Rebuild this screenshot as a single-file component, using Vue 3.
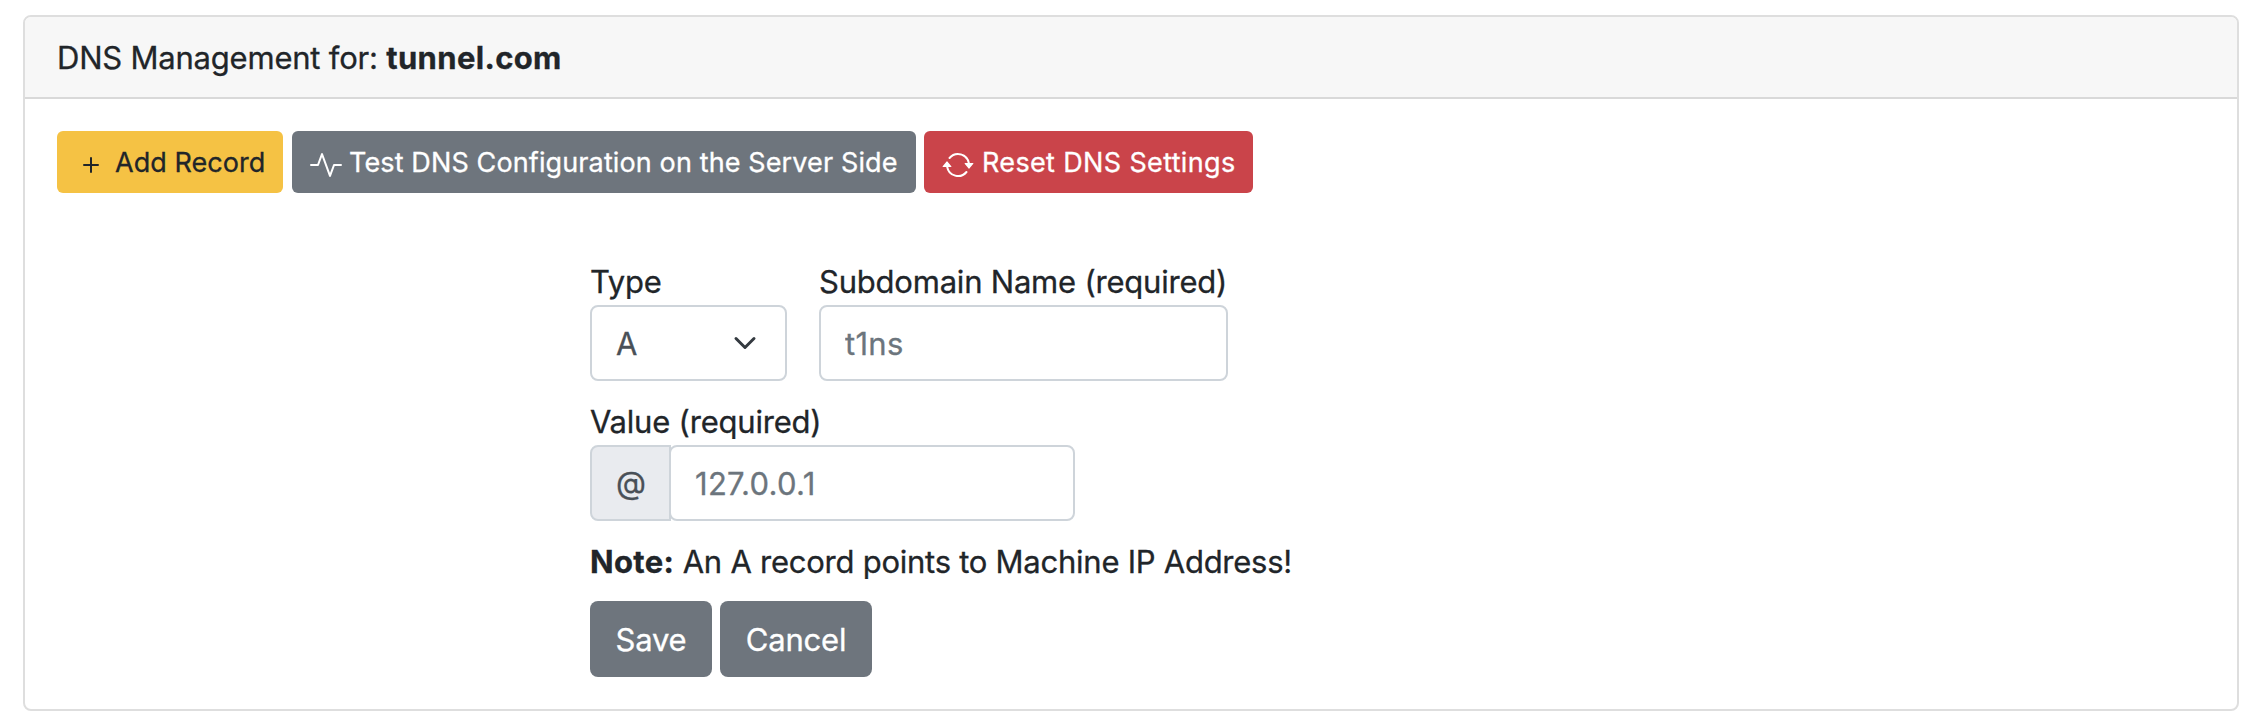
<script setup>
import { ref } from 'vue'

const type = ref('A')
const subdomain = ref('')
const value = ref('')
</script>

<template>
  <main class="page">
    <section class="card">
      <header class="card-header"><span class="heading">DNS Management for:</span> <strong class="domain">tunnel.com</strong></header>
      <div class="card-body">
        <div class="toolbar">
          <button type="button" class="btn-sm add">
            <svg class="icon" viewBox="0 0 16 16" fill="currentColor"><path d="M8 4a.5.5 0 0 1 .5.5v3h3a.5.5 0 0 1 0 1h-3v3a.5.5 0 0 1-1 0v-3h-3a.5.5 0 0 1 0-1h3v-3A.5.5 0 0 1 8 4z" /></svg>
            <span>Add Record</span>
          </button>
          <button type="button" class="btn-sm test">
            <svg class="icon" viewBox="0 0 16 16" fill="currentColor"><path d="M6 2a.5.5 0 0 1 .47.33L10 12.036l1.53-4.208A.5.5 0 0 1 12 7.5h3.5a.5.5 0 0 1 0 1h-3.15l-1.88 5.17a.5.5 0 0 1-.94 0L6 3.964 4.47 8.171A.5.5 0 0 1 4 8.5H.5a.5.5 0 0 1 0-1h3.15l1.88-5.17A.5.5 0 0 1 6 2z" /></svg>
            <span>Test DNS Configuration on the Server Side</span>
          </button>
          <button type="button" class="btn-sm reset">
            <svg class="icon" viewBox="0 0 16 16" fill="currentColor">
              <path d="M11.534 7h3.932a.25.25 0 0 1 .192.41l-1.966 2.36a.25.25 0 0 1-.384 0l-1.966-2.36a.25.25 0 0 1 .192-.41zm-11 2h3.932a.25.25 0 0 0 .192-.41L2.692 6.23a.25.25 0 0 0-.384 0L.342 8.59A.25.25 0 0 0 .534 9z" />
              <path d="M8 3c-1.552 0-2.94.707-3.857 1.818a.5.5 0 1 1-.771-.636A6.002 6.002 0 0 1 13.917 7H12.9A5.002 5.002 0 0 0 8 3zM3.1 9a5.002 5.002 0 0 0 8.757 2.182.5.5 0 1 1 .771.636A6.002 6.002 0 0 1 2.083 9H3.1z" />
            </svg>
            <span>Reset DNS Settings</span>
          </button>
        </div>

        <form class="form" @submit.prevent>
          <div class="row">
            <div class="field type-field">
              <label for="type">Type</label>
              <div class="select-wrap">
                <select id="type" v-model="type" class="control">
                  <option>A</option>
                  <option>NS</option>
                </select>
                <svg class="chevron" viewBox="0 0 16 16" fill="none"><path d="M2 5l6 6 6-6" stroke="#343a40" stroke-width="2" stroke-linecap="round" stroke-linejoin="round" /></svg>
              </div>
            </div>
            <div class="field sub-field">
              <label for="sub">Subdomain Name (required)</label>
              <input id="sub" v-model="subdomain" class="control" placeholder="t1ns" />
            </div>
          </div>
          <div class="field value-field">
            <label for="value">Value (required)</label>
            <div class="group">
              <span class="addon">@</span>
              <input id="value" v-model="value" class="control" placeholder="127.0.0.1" />
            </div>
          </div>
          <p class="note"><strong>Note:</strong> <span>An A record points to Machine IP Address!</span></p>
          <div class="actions">
            <button type="submit" class="btn save">Save</button>
            <button type="button" class="btn cancel">Cancel</button>
          </div>
        </form>
      </div>
    </section>
  </main>
</template>

<style>
body {
  background: #fff;
}
</style>

<style scoped>
.page,
.page * {
  box-sizing: border-box;
}
.page {
  padding: 15px 19px 15px 23px;
  height: 726px;
  font: 400 31px/48px Inter, "Noto Sans", sans-serif;
  color: #212529;
  letter-spacing: -0.21px;
  -webkit-text-stroke: 0.3px currentColor;
}
.card {
  height: 696px;
  border: 2px solid #dedede;
  border-radius: 8px;
  overflow: hidden;
}
.card-header {
  height: 82px;
  padding: 17px 32px 15px;
  background: #f7f7f7;
  border-bottom: 2px solid #d9d9d9;
  white-space: nowrap;
}
strong {
  font-weight: 700;
  letter-spacing: 0.35px;
}
.card-body {
  padding: 32px;
}
.toolbar {
  display: flex;
  gap: 8px;
}
button {
  border: 0;
  font: inherit;
  letter-spacing: inherit;
  color: #fff;
  background: #6e757d;
  white-space: nowrap;
}
.btn-sm {
  display: flex;
  align-items: center;
  height: 62px;
  padding: 0 18px;
  gap: 8px;
  border-radius: 6px;
  font-size: 27px;
  line-height: 42px;
  letter-spacing: 0.12px;
}
.btn-sm span {
  padding-top: 1px;
}
.add {
  width: 226px;
  margin-right: 1px;
  color: #212529;
  background: #f5c244;
  letter-spacing: 0.05px;
}
.test {
  width: 624px;
  gap: 7px;
}
.reset {
  width: 329px;
  background: #ca444a;
  letter-spacing: 0.35px;
}
.icon {
  flex: none;
  width: 32px;
  height: 32px;
  margin-top: 6px;
}
.form {
  margin: 64px 0 0 533px;
}
.row {
  display: flex;
  gap: 32px;
}
.field {
  margin-bottom: 16px;
}
label {
  display: block;
  padding-top: 2px;
  line-height: 46px;
  white-space: nowrap;
}
.type-field {
  width: 197px;
}
.sub-field {
  width: 409px;
}
.value-field {
  width: 485px;
}
.control {
  display: block;
  width: 100%;
  height: 76px;
  padding: 12px 24px;
  border: 2px solid #ced4da;
  border-radius: 8px;
  outline: 0;
  background: #fff;
  color: #495057;
  font: inherit;
  letter-spacing: 0.3px;
  appearance: none;
}
select.control {
  padding: 13px 24px 11px;
}
.control::placeholder {
  color: #6c757d;
  opacity: 1;
  -webkit-text-stroke: 0.3px #6c757d;
}
.select-wrap {
  position: relative;
}
.chevron {
  position: absolute;
  right: 30px;
  top: 26px;
  width: 24px;
  height: 24px;
  pointer-events: none;
}
.group {
  display: flex;
}
.addon {
  flex: none;
  width: 81px;
  height: 76px;
  padding: 12px 0 12px 24px;
  border: 2px solid #ced4da;
  border-radius: 8px 0 0 8px;
  background: #e9ebef;
  color: #495057;
}
.group .control {
  flex: 1;
  width: auto;
  min-width: 0;
  margin-left: -2px;
}
.note {
  margin: 0 0 16px;
  padding-top: 2px;
  line-height: 46px;
  letter-spacing: -0.25px;
  white-space: nowrap;
}
.actions {
  display: flex;
  gap: 8px;
}
.btn {
  height: 76px;
  padding: 2px 0 0;
  border-radius: 8px;
}
.save {
  width: 122px;
}
.cancel {
  width: 152px;
}
</style>
